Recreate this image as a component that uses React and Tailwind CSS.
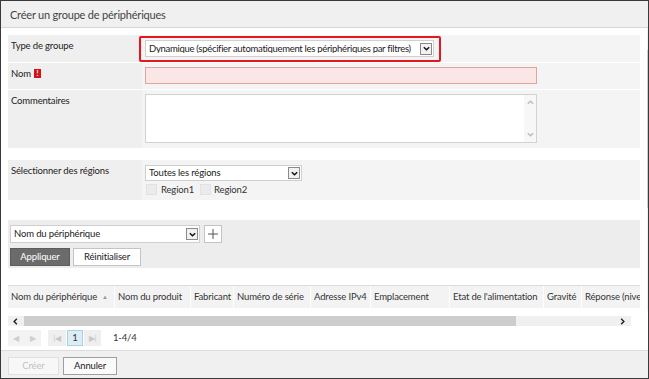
import React from "react";

const Chevron = ({ className = "" }) => (
  <svg viewBox="0 0 10 10" className={className} fill="none" stroke="currentColor" strokeWidth="1.6">
    <path d="M2 3.5 L5 6.5 L8 3.5" />
  </svg>
);

function SelectBox({ text, className = "", textClass = "" }) {
  return (
    <div className={`flex items-center bg-white border border-[#cfcfcf] pl-[3px] pr-[1px] ${className}`}>
      <span className={`flex-1 whitespace-nowrap overflow-hidden text-[#222] ${textClass}`}>{text}</span>
      <span className="w-[12px] h-[12px] shrink-0 border border-[#8a8a8a] bg-[#f2f2f2] flex items-center justify-center text-[#111]">
        <Chevron className="w-[9px] h-[9px]" />
      </span>
    </div>
  );
}

function Row({ label, children, h, extra }) {
  return (
    <div className={`flex ${h}`}>
      <div className="w-[134px] bg-[#efefef] pl-[3px] pt-[6px] text-[#222] flex items-start gap-[3px]">
        {label}
        {extra}
      </div>
      <div className="flex-1 bg-[#f4f4f4] pl-[3px]">{children}</div>
    </div>
  );
}

const cols = [
  ["Nom du périphérique", 106],
  ["Nom du produit", 75],
  ["Fabricant", 42],
  ["Numéro de série", 76],
  ["Adresse IPv4", 59],
  ["Emplacement", 78],
  ["Etat de l'alimentation", 93],
  ["Gravité", 37],
  ["Réponse (niveau)", 58],
];

export default function App() {
  return (
    <div
      className="w-[649px] h-[379px] border border-[#3a3a3a] flex flex-col overflow-hidden bg-white text-[9.5px] tracking-[-0.15px] leading-none"
      style={{ fontFamily: "Lato, 'Open Sans', sans-serif" }}
    >
      {/* header */}
      <div className="h-[27px] shrink-0 bg-[#f0f0f0] border-b border-[#d6d6d6] flex items-center pl-[9px] text-[11px] tracking-[-0.2px] text-[#444]">
        Créer un groupe de périphériques
      </div>

      {/* body */}
      <div className="flex shrink-0 h-[283px]">
        <div className="flex-1 pl-[7px] pr-[7px] pt-[7px] flex flex-col">
          <div className="flex flex-col gap-px">
            <Row label="Type de groupe" h="h-[27px]">
              <div className="relative w-[289px] mt-[5px]">
                <SelectBox
                  text="Dynamique (spécifier automatiquement les périphériques par filtres)"
                  className="h-[17px]"
                  textClass="tracking-[-0.3px]"
                />
                <div className="absolute left-[-6px] right-[-7px] top-[-4px] bottom-[-5px] border-2 border-[#e8141e] rounded-[2px]" />
              </div>
            </Row>
            <Row
              label="Nom"
              h="h-[26px]"
              extra={
                <span className="w-[7px] h-[9px] bg-[#d9101a] text-white text-[7px] font-bold flex items-center justify-center">
                  !
                </span>
              }
            >
              <div className="w-[392px] h-[17px] mt-[4px] bg-[#fbe6e6] border border-[#e3a3a3]" />
            </Row>
            <Row label="Commentaires" h="h-[58px]">
              <div className="w-[392px] h-[49px] mt-[4px] bg-white border border-[#d2d2d2] flex justify-end">
                <div className="w-[12px] bg-[#f7f7f7] flex flex-col items-center justify-between py-[3px] text-[#bdbdbd]">
                  <Chevron className="w-[9px] h-[9px] rotate-180" />
                  <Chevron className="w-[9px] h-[9px]" />
                </div>
              </div>
            </Row>
          </div>

          <div className="mt-[12px]">
            <Row label="Sélectionner des régions" h="h-[40px]">
              <div className="pt-[5px]">
                <SelectBox text="Toutes les régions" className="w-[157px] h-[16px]" />
                <div className="flex items-center mt-[3px] text-[#333]">
                  <span className="w-[11px] h-[11px] bg-[#ebebeb] border border-[#e2e2e2] ml-[1px]" />
                  <span className="ml-[4px]">Region1</span>
                  <span className="w-[11px] h-[11px] bg-[#ebebeb] border border-[#e2e2e2] ml-[6px]" />
                  <span className="ml-[3px]">Region2</span>
                </div>
              </div>
            </Row>
          </div>

          <div className="mt-[20px] h-[48px] bg-[#ededed] pl-[2px] pt-[5px]">
            <div className="flex items-center gap-[4px]">
              <SelectBox text="Nom du périphérique" className="w-[190px] h-[18px]" />
              <div className="w-[18px] h-[18px] bg-white border border-[#c4c4c4] flex items-center justify-center text-[#555]">
                <svg viewBox="0 0 10 10" className="w-[10px] h-[10px]" stroke="currentColor" strokeWidth="1">
                  <path d="M5 0 V10 M0 5 H10" />
                </svg>
              </div>
            </div>
            <div className="flex gap-[3px] mt-[5px]">
              <div className="w-[60px] h-[18px] bg-[#6b6b6b] border border-[#5c5c5c] text-white flex items-center justify-center">
                Appliquer
              </div>
              <div className="w-[68px] h-[18px] bg-white border border-[#c4c4c4] text-[#222] flex items-center justify-center">
                Réinitialiser
              </div>
            </div>
          </div>

          <div className="mt-[17px] border-t border-[#dcdcdc] h-[23px] flex bg-white gap-px">
            {cols.map(([c, w], i) => (
              <div
                key={c}
                className="bg-[#f3f3f3] flex items-center pl-[3px] text-[#333] whitespace-nowrap overflow-hidden shrink-0"
                style={{ width: w }}
              >
                {c}
                {i === 0 && (
                  <span className="ml-[5px] text-[6px] text-[#999]">▲</span>
                )}
              </div>
            ))}
          </div>
        </div>

        {/* vertical scrollbar */}
        <div className="w-[11px] mr-px flex flex-col items-center bg-[#f0f0f0] pt-[9px] pb-[4px]">
          <Chevron className="w-[9px] h-[9px] rotate-180 text-[#333]" />
          <div className="w-full h-[158px] bg-[#cdcdcd] mt-[4px]" />
          <div className="flex-1" />
          <Chevron className="w-[9px] h-[9px] text-[#333]" />
        </div>
      </div>

      {/* horizontal scrollbar */}
      <div className="mx-[7px] mt-[5px] mr-[17px] h-[10px] bg-[#f0f0f0] flex items-center">
        <Chevron className="w-[9px] h-[9px] rotate-90 text-[#222] ml-[3px]" />
        <div className="w-[492px] h-full bg-[#cdcdcd] ml-[4px]" />
        <div className="flex-1" />
        <Chevron className="w-[9px] h-[9px] -rotate-90 text-[#222] mr-[4px]" />
      </div>

      {/* pagination */}
      <div className="flex items-center h-[24px] pl-[7px] text-[#333]">
        <div className="flex bg-[#f3f3f3] h-[16px] w-[33px] items-center justify-around text-[#cfcfcf] text-[8px]">
          <span>◀</span>
          <span>▶</span>
        </div>
        <div className="flex ml-[7px] gap-[1px] h-[16px]">
          <div className="w-[18px] bg-[#efefef] flex items-center justify-center text-[#c8c8c8] text-[8px]">|◀</div>
          <div className="w-[16px] bg-[#dcedf6] border border-[#aad0e6] flex items-center justify-center">1</div>
          <div className="w-[17px] bg-[#efefef] flex items-center justify-center text-[#c8c8c8] text-[8px]">▶|</div>
        </div>
        <span className="ml-[12px]">1-4/4</span>
      </div>

      {/* footer */}
      <div className="flex-1 bg-[#f0f0f0] border-t border-[#dcdcdc] flex items-start gap-[4px] pl-[7px] pt-[6px]">
        <div className="w-[51px] h-[18px] bg-[#f7f7f7] border border-[#e0e0e0] text-[#c2c2c2] flex items-center justify-center">
          Créer
        </div>
        <div className="w-[54px] h-[18px] bg-[#fafafa] border border-[#9f9f9f] text-[#222] flex items-center justify-center">
          Annuler
        </div>
      </div>
    </div>
  );
}
